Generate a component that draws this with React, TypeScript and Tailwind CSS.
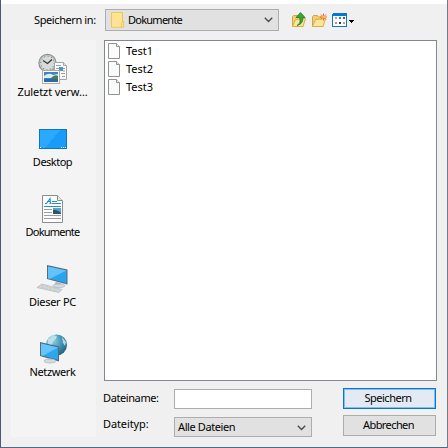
import type { ReactNode } from 'react';

const places: { label: string; icon: ReactNode; tracking: string }[] = [
  { label: 'Zuletzt verw…', icon: <RecentIcon />, tracking: 'tracking-[-0.1px]' },
  { label: 'Desktop', icon: <DesktopIcon />, tracking: 'tracking-[-0.5px]' },
  { label: 'Dokumente', icon: <DocumentsIcon />, tracking: 'tracking-[-0.75px]' },
  { label: 'Dieser PC', icon: <ComputerIcon />, tracking: 'tracking-[-0.3px]' },
  { label: 'Netzwerk', icon: <NetworkIcon />, tracking: 'tracking-[-0.4px]' },
];

function RecentIcon() {
  return (
    <svg width="32" height="32" viewBox="0 0 32 32">
      <circle cx="10.5" cy="10" r="8.6" fill="#c9cccd" stroke="#8b9092" strokeWidth="1.2" />
      <circle cx="10.5" cy="10" r="6.7" fill="#d9dada" stroke="#858a8c" strokeWidth="1.1" strokeDasharray="1 2.5" />
      <path d="M6 7.5 10.5 10.5 15 6.5" fill="none" stroke="#34383b" strokeWidth="1.3" />
      <path d="M17.5 9.5h9l3 3v14h-12z" fill="#fafafa" stroke="#a4a7a8" />
      <path d="M26.5 9.5v3h3" fill="#e3e5e6" stroke="#a4a7a8" />
      <path d="M19 12.5h5M19 15.5h3M26 15.5h2M26 18h2M24 20.5h4M25 23.5h3" stroke="#9b9ea0" />
      <rect x="22" y="14" width="4" height="4" fill="#4b94c8" />
      <rect x="5.5" y="17.5" width="17" height="13" fill="#fff" stroke="#aaa" />
      <rect x="7" y="19" width="14" height="10" fill="#3f83c4" />
      <path d="M7 23q5-4 9-1l5-1v4H7z" fill="#d3effa" />
      <path d="M14 25q4-4 7-2v3h-8z" fill="#4c7c4c" />
      <path d="M7 26h14v3H7z" fill="#2b69a6" />
    </svg>
  );
}

function DesktopIcon() {
  return (
    <svg width="32" height="32" viewBox="0 0 32 32" shapeRendering="crispEdges">
      <rect x="2" y="6" width="28" height="20" fill="#0878bd" />
      <rect x="3" y="7" width="26" height="18" fill="#199bfa" />
      <path d="M3 7h20L8 25H3z" fill="#2ba8ff" />
      <path d="M3 24h1v1H3zM24 24h1v1h-1zM26 24h1v1h-1zM28 24h1v1h-1z" fill="#fff" />
    </svg>
  );
}

function DocumentsIcon() {
  return (
    <svg width="32" height="32" viewBox="0 0 32 32">
      <path d="M5.5 2.5h15l5 5v22h-20z" fill="#fcfcfc" stroke="#8b8e8e" />
      <path d="M20.5 2.5v5h5" fill="#e7e8e8" stroke="#8b8e8e" />
      <path d="M8 10.5h1.5L13 5.5l.5 5M10 8.5h3.5M12.5 10.5h2" fill="none" stroke="#278bcb" strokeWidth="1.1" />
      <path d="M15 8.5h5M15 10.5h9M7 13.5h17" stroke="#2491d2" />
      <path d="M7 16.5h8M7 19.5h8M7 22.5h17M7 25.5h17" stroke="#9b9d9e" />
      <rect x="16" y="15" width="8" height="6" fill="#59a3d0" />
      <path d="M16 17q3-1 8 3v1h-8z" fill="#315364" />
    </svg>
  );
}

function ComputerIcon() {
  return (
    <svg width="32" height="32" viewBox="0 0 32 32">
      <path d="M10 2 30.5 6.5v15L10 16z" fill="#596b75" />
      <path d="m11 3.5 18.5 4v12.7L11 15.2z" fill="#28a4ee" />
      <path d="m11 3.5 18.5 4L13 15.7l-2-.5z" fill="#62c2fb" />
      <path d="m19 19 5 1-.5 3-6-2z" fill="#aeb7bd" />
      <ellipse cx="22" cy="22.7" rx="6" ry="1.8" fill="#d5dce0" stroke="#a1abb1" strokeWidth=".6" />
      <path d="m5 21 20 5.5-3 3L0 24.5z" fill="#dde0e2" stroke="#a3abb0" strokeWidth=".6" />
      <path d="m3.5 22.2 20 5.2M2 23.5l20 5.2M7 21.5l-3 3.9m7-2.8-3 3.8m7-2.7-3 3.8m7-2.7-3 3.7" stroke="#bcc2c5" strokeWidth=".6" />
    </svg>
  );
}

function NetworkIcon() {
  return (
    <svg width="32" height="32" viewBox="0 0 32 32">
      <defs>
        <radialGradient id="globe" cx=".35" cy=".3" r=".75">
          <stop offset="0" stopColor="#91cfe3" />
          <stop offset=".55" stopColor="#4192b3" />
          <stop offset="1" stopColor="#22617e" />
        </radialGradient>
      </defs>
      <circle cx="19.5" cy="12" r="10.5" fill="url(#globe)" />
      <path d="m11 6 5-4 4 1-1 3-3 2-1 4-5 1zM25 4l4 5-1 4-2-3z" fill="#c5e6ed" opacity=".85" />
      <path d="M3 9 22 13.5v15L3 23z" fill="#526a79" />
      <path d="m4 10.5 17 4v12.3L4 22.2z" fill="#2ba7ef" />
      <path d="m4 10.5 17 4-15 8.2-2-.5z" fill="#65c5fb" />
      <path d="m11 25 4 1v2h-4z" fill="#aeb6bb" />
      <ellipse cx="13" cy="28" rx="6" ry="2" fill="#d5dce0" stroke="#a1abb1" strokeWidth=".6" />
    </svg>
  );
}

function FolderIcon() {
  return (
    <svg width="14" height="18" viewBox="0 0 14 18">
      <path d="M.5 1.5h11v9h1.2v5.8H.5z" fill="#ffe394" stroke="#edc654" />
      <path d="M10.5 16v-3.5l1.2-2" fill="none" stroke="#edc654" />
    </svg>
  );
}

function FileIcon() {
  return (
    <svg width="12" height="16" viewBox="0 0 12 16">
      <path d="M.5.5h8l3 3v12H.5z" fill="#fafbfb" stroke="#929292" />
      <path d="M8.5.5v3h3" fill="#ededed" stroke="#929292" />
    </svg>
  );
}

function OpenFolder() {
  return (
    <>
      <path d="M1.5 14V4.5l1-1h4l1 1.5H12v9.5z" fill="#eed076" stroke="#d3a53b" />
      <path d="m1.5 14.5 3-7 10-1-2.5 8z" fill="#fae69a" stroke="#d8ae45" />
    </>
  );
}

function UpIcon() {
  return (
    <svg width="16" height="16" viewBox="0 0 16 16">
      <OpenFolder />
      <path d="M6 13.5q4.3-2 2.7-8H5L9.5.6l4.5 4.9h-2.2q.5 6.5-5.8 8z" fill="#35a92c" stroke="#24802a" strokeWidth=".9" />
    </svg>
  );
}

function NewFolderIcon() {
  return (
    <svg width="16" height="16" viewBox="0 0 16 16">
      <OpenFolder />
      <path d="M12.5 1.5v7M9 5h7M10 2.5l5 5m0-5-5 5" stroke="#ee642f" />
      <circle cx="12.5" cy="5" r="1.5" fill="#ffc13b" />
    </svg>
  );
}

function ViewIcon() {
  return (
    <svg width="23" height="16" viewBox="0 0 23 16" shapeRendering="crispEdges">
      <path d="M0 1 1 0h13l1 1v13H0z" fill="#0878d1" />
      <path d="M1 3h13v10H1z" fill="#fff" />
      <path d="M3 4h2v2H3z" fill="#aaa0c2" />
      <path d="M7 4h2v2H7z" fill="#2787d8" />
      <path d="M11 4h2v2h-2z" fill="#168334" />
      <path d="M3 9h2v2H3z" fill="#f27855" />
      <path d="M7 9h2v2H7z" fill="#173f91" />
      <path d="M11 9h2v2h-2z" fill="#caa12c" />
      <path d="M17 7h5v1h-1v1h-1v1h-1V9h-1V8h-1z" fill="#000" />
    </svg>
  );
}

function Chevron() {
  return (
    <svg width="9" height="6" viewBox="0 0 9 6">
      <path d="m.8.8 3.7 3.7L8.2.8" fill="none" stroke="#4a4a4a" strokeWidth="1.4" />
    </svg>
  );
}

export default function App() {
  return (
    <main className="flex h-[448px] w-[448px] flex-col overflow-hidden border-x border-b border-l-[#485b76] border-r-[#737b87] border-b-[#526981] bg-[#f0f0f0] font-['Noto_Sans',sans-serif] text-[11px] leading-[14px] text-black">
      <div className="h-1 shrink-0 bg-white" />
      <header className="flex h-9 shrink-0 pt-[5px]">
        <label className="w-[104px] pt-[4px] pl-[33px] tracking-[-0.4px] whitespace-nowrap">Speichern in:</label>
        <button className="flex h-[22px] w-[174px] items-center border border-[#adadb1] bg-[#e1e1e1] pr-[5px] pl-[5px]">
          <FolderIcon />
          <span className="ml-[3px] tracking-[-0.75px]">Dokumente</span>
          <span className="ml-auto"><Chevron /></span>
        </button>
        <div className="ml-[12px] flex pt-[3px]">
          <UpIcon />
          <span className="ml-1"><NewFolderIcon /></span>
          <span className="ml-[5px] pt-px"><ViewIcon /></span>
        </div>
      </header>
      <div className="flex h-[397px] shrink-0 pl-[10px]">
        <nav className="w-[85px] shrink-0 bg-[#f4f4f4] pr-px">
          {places.map((place) => (
            <div key={place.label} className="flex h-[70px] flex-col items-center pt-[13px]">
              {place.icon}
              <span className={`mr-px whitespace-nowrap ${place.tracking}`}>{place.label}</span>
            </div>
          ))}
        </nav>
        <section className="ml-2 w-[333px]">
          <div className="h-[341px] border border-[#828790] bg-white pt-px pl-[3px]">
            {['Test1', 'Test2', 'Test3'].map((name) => (
              <div key={name} className="flex h-[18px] items-center gap-[6px]">
                <FileIcon />
                <span>{name}</span>
              </div>
            ))}
          </div>
          <div className="flex pt-[7px]">
            <div className="-ml-px w-[71px] whitespace-nowrap">
              <label className="block pt-[3px] tracking-[-0.4px]">Dateiname:</label>
              <label className="block pt-[12px] tracking-[-0.1px]">Dateityp:</label>
            </div>
            <div className="w-[138px] pt-px">
              <input className="block h-5 w-full border border-[#abadb3] bg-white" />
              <button className="mt-2 flex h-5 w-full items-center border border-[#adadb1] bg-[#e1e1e1] pr-[5px] pl-[3px]">
                <span className="tracking-[-0.4px]">Alle Dateien</span>
                <span className="ml-auto pt-px"><Chevron /></span>
              </button>
            </div>
            <div className="ml-[31px] w-[93px]">
              <button className="block h-[21px] w-full border border-[#0078d7] bg-[#e3eaf3] pr-[3px] pb-px tracking-[-0.5px] shadow-[inset_0_0_0_1px_#8abce8]">Speichern</button>
              <button className="mt-[6px] block h-[21px] w-full border border-[#adadad] bg-[#e1e1e1] pr-[2px] pb-px tracking-[-0.6px]">Abbrechen</button>
            </div>
          </div>
        </section>
      </div>
    </main>
  );
}
